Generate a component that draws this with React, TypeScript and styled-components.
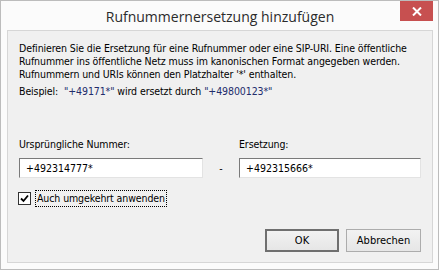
import React from 'react';
import styled, { createGlobalStyle } from 'styled-components';

const GlobalStyle = createGlobalStyle`
  body {
    margin: 0;
    background: #fff;
  }
`;

const Window = styled.div`
  box-sizing: border-box;
  width: 439px;
  height: 270px;
  border: 1px solid #bcbcbc;
  background: #fbfbfb;
  display: flex;
  flex-direction: column;
  padding: 0 5px 6px 6px;
`;

const TitleBar = styled.div`
  height: 29px;
  display: grid;
  grid-template-columns: 1fr auto 1fr;
  align-items: center;
`;

const Title = styled.div`
  grid-column: 2;
  font-family: 'Open Sans', 'Noto Sans', sans-serif;
  font-size: 14px;
  color: #2b2b2b;
  padding-top: 1px;
`;

const CloseButton = styled.div`
  grid-column: 3;
  justify-self: end;
  align-self: start;
  width: 33px;
  height: 20px;
  background: #c75050;
  display: flex;
  align-items: center;
  justify-content: center;
`;

const Client = styled.div`
  flex: 1;
  border: 1px solid #d6d6d6;
  background: #f0f0f0;
  padding: 11px 11px 10px 11px;
  display: flex;
  flex-direction: column;
  font-family: 'DejaVu Sans', sans-serif;
  font-stretch: condensed;
  font-size: 10.5px;
  letter-spacing: -0.1px;
  line-height: 13px;
  color: #000;
`;

const Text = styled.p<{ $gap?: number }>`
  margin: ${p => p.$gap ?? 0}px 0 0 0;
  white-space: nowrap;
`;

const Quote = styled.span`
  color: #222c6c;
`;

const Fields = styled.div`
  margin-top: 40px;
  display: grid;
  grid-template-columns: 184px 1fr 182px;
  row-gap: 7px;
`;

const Label = styled.label<{ $col: number }>`
  grid-column: ${p => p.$col};
  grid-row: 1;
`;

const Field = styled.div<{ $col: number }>`
  grid-column: ${p => p.$col};
  grid-row: 2;
  box-sizing: border-box;
  height: 20px;
  background: #fff;
  border: 1px solid;
  border-color: #7a7a7a #e3e3e3 #e3e3e3 #7a7a7a;
  padding: 3px 0 0 6px;
  font-size: 10.5px;
  letter-spacing: 0;
`;

const Dash = styled.div`
  grid-column: 2;
  grid-row: 2;
  align-self: center;
  text-align: center;
`;

const CheckRow = styled.div`
  margin-top: 12px;
  margin-left: -1px;
  display: flex;
  align-items: center;
  gap: 4px;
`;

const Box = styled.div`
  box-sizing: border-box;
  width: 13px;
  height: 13px;
  border: 1px solid #333;
  background: #fff;
  display: flex;
  align-items: center;
  justify-content: center;
`;

const Focus = styled.span`
  border: 1px dotted #000;
  padding: 1px;
`;

const Buttons = styled.div`
  margin-top: auto;
  display: flex;
  justify-content: flex-end;
  gap: 7px;
`;

const Button = styled.div<{ $primary?: boolean }>`
  box-sizing: border-box;
  width: ${p => (p.$primary ? 74 : 75)}px;
  height: 23px;
  display: flex;
  align-items: center;
  justify-content: center;
  background: linear-gradient(#f2f2f2, #e6e6e6);
  border: ${p => (p.$primary ? '2px solid #6f6f6f' : '1px solid #acacac')};
  font-size: 11px;
  letter-spacing: 0;
`;

export default function App() {
  return (
    <>
      <GlobalStyle />
      <Window>
        <TitleBar>
          <Title>Rufnummernersetzung hinzufügen</Title>
          <CloseButton>
            <svg width="10" height="9" viewBox="0 0 10 9">
              <path d="M1 0.5 L9 8.5 M9 0.5 L1 8.5" stroke="#fff" strokeWidth="2" />
            </svg>
          </CloseButton>
        </TitleBar>
        <Client>
          <Text>
            Definieren Sie die Ersetzung für eine Rufnummer oder eine SIP-URI. Eine öffentliche
            <br />
            Rufnummer ins öffentliche Netz muss im kanonischen Format angegeben werden.
            <br />
            Rufnummern und URIs können den Platzhalter '*' enthalten.
          </Text>
          <Text $gap={4}>
            Beispiel:&nbsp; <Quote>"+49171*"</Quote> wird ersetzt durch <Quote>"+49800123*"</Quote>
          </Text>
          <Fields>
            <Label $col={1}>Ursprüngliche Nummer:</Label>
            <Label $col={3}>Ersetzung:</Label>
            <Field $col={1}>+492314777*</Field>
            <Dash>-</Dash>
            <Field $col={3}>+492315666*</Field>
          </Fields>
          <CheckRow>
            <Box>
              <svg width="9" height="9" viewBox="0 0 9 9">
                <path d="M1 4.5 L3.5 7 L8 1.5" stroke="#000" strokeWidth="1.8" fill="none" />
              </svg>
            </Box>
            <Focus>Auch umgekehrt anwenden</Focus>
          </CheckRow>
          <Buttons>
            <Button $primary>OK</Button>
            <Button>Abbrechen</Button>
          </Buttons>
        </Client>
      </Window>
    </>
  );
}
